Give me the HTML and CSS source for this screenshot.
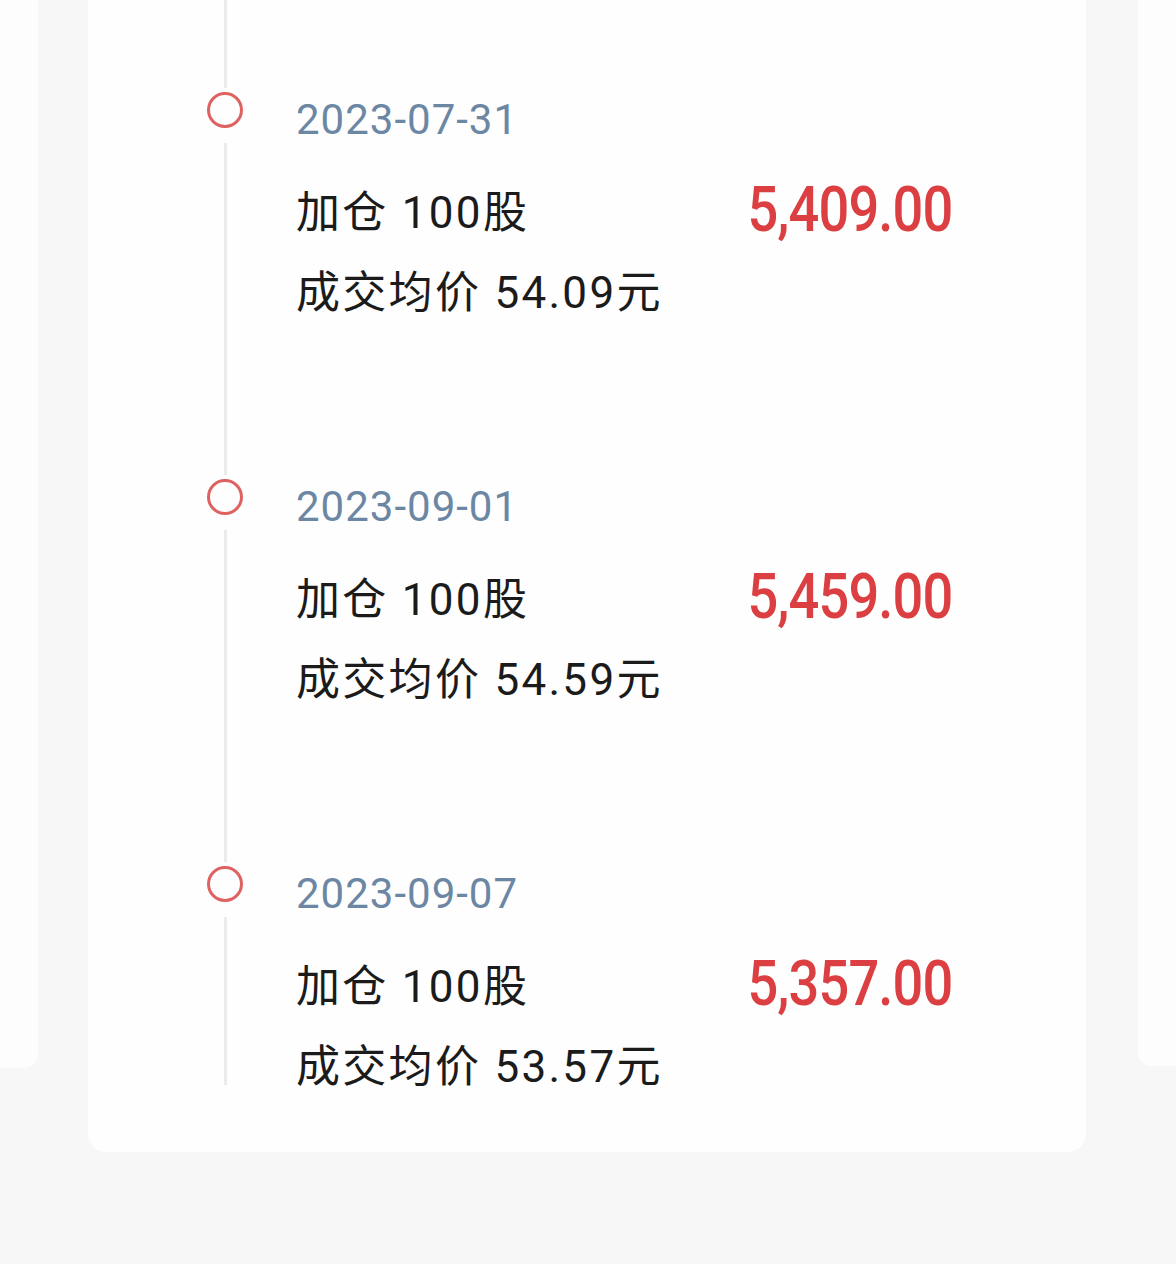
FILE: index.html
```html
<!DOCTYPE html>
<html lang="zh-CN">
<head>
<meta charset="utf-8">
<title>加仓记录</title>
<link rel="stylesheet" href="styles.css">
</head>
<body>
<div class="page">
  <div class="side side-left"></div>
  <div class="card">
    <div class="lead"><div class="seg"></div></div>
    <div class="item">
      <div class="rail"><div class="dot"></div><div class="seg"></div></div>
      <div class="content">
        <div class="date">2023-07-31</div>
        <div class="row"><span class="label">加仓 100股</span><span class="amount">5,409.00</span></div>
        <div class="row"><span class="label">成交均价 54.09元</span></div>
      </div>
    </div>
    <div class="item">
      <div class="rail"><div class="dot"></div><div class="seg"></div></div>
      <div class="content">
        <div class="date">2023-09-01</div>
        <div class="row"><span class="label">加仓 100股</span><span class="amount">5,459.00</span></div>
        <div class="row"><span class="label">成交均价 54.59元</span></div>
      </div>
    </div>
    <div class="item item-last">
      <div class="rail"><div class="dot"></div><div class="seg"></div></div>
      <div class="content">
        <div class="date">2023-09-07</div>
        <div class="row"><span class="label">加仓 100股</span><span class="amount">5,357.00</span></div>
        <div class="row"><span class="label">成交均价 53.57元</span></div>
      </div>
    </div>
  </div>
  <div class="side side-right"></div>
</div>
</body>
</html>
```
FILE: styles.css
```css
* { box-sizing: border-box; }
html, body { margin: 0; padding: 0; }
body {
  background: #f7f7f7;
  width: 1176px;
  height: 1264px;
  overflow: hidden;
  font-family: Roboto, "Noto Sans CJK SC", "Noto Sans", sans-serif;
}
.page {
  display: flex;
  align-items: flex-start;
  gap: 50px;
}
.side {
  width: 38px;
  background: #fdfdfd;
}
.side-left { height: 1068px; border-bottom-right-radius: 14px; }
.side-right { height: 1066px; border-bottom-left-radius: 14px; margin-left: 2px; }
.card {
  width: 998px;
  background: #fefefe;
  border-radius: 0 0 18px 18px;
  padding: 0 0 67px 119px;
}
.lead {
  height: 88px;
  width: 36px;
  display: flex;
  justify-content: center;
}
.seg {
  width: 3px;
  background: #ebebeb;
}
.lead .seg { height: 88px; }
.item {
  display: flex;
  height: 387px;
}
.item-last { height: 223px; }
.rail {
  width: 36px;
  display: flex;
  flex-direction: column;
  align-items: center;
}
.dot {
  margin-top: 4px;
  width: 36px;
  height: 36px;
  border-radius: 50%;
  border: 3px solid #df6262;
  flex: none;
}
.rail .seg {
  flex: 1;
  margin-top: 15px;
}
.content {
  margin-left: 53px;
  width: 656px;
}
.date {
  height: 60px;
  line-height: 64px;
  margin-bottom: 21px;
  font-size: 42px;
  letter-spacing: 1px;
  color: #6b87a4;
}
.row {
  display: flex;
  justify-content: space-between;
  align-items: center;
  height: 80px;
}
.label {
  font-size: 44px;
  letter-spacing: 2.3px;
  color: #1b1b1b;
}
.amount {
  display: inline-block;
  font-family: Roboto, "Liberation Sans", sans-serif;
  font-weight: 500;
  font-size: 63px;
  letter-spacing: -1px;
  color: #dc3f41;
  transform: scaleX(0.86);
  transform-origin: right center;
}
```
